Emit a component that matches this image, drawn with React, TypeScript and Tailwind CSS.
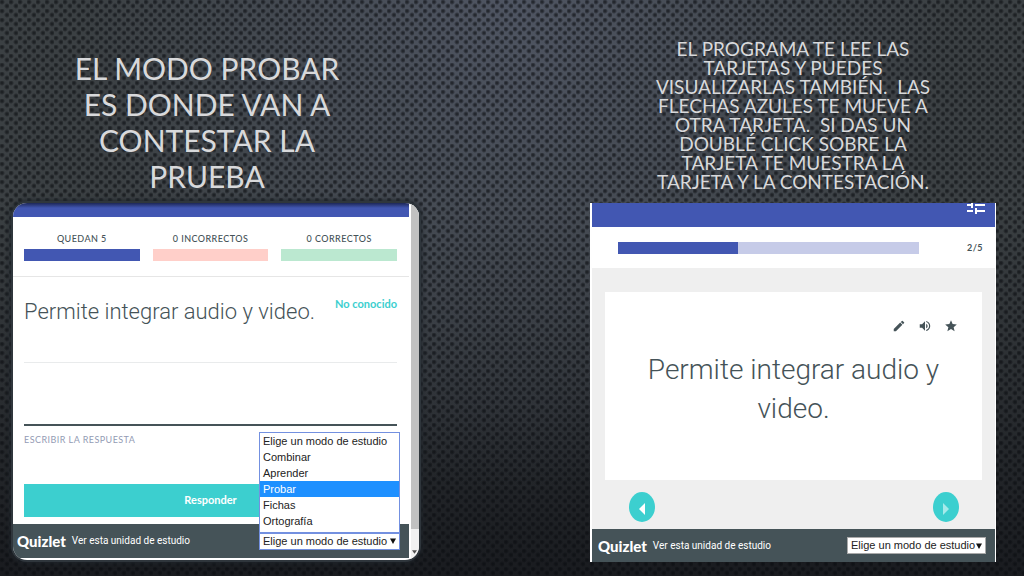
import type { ReactNode } from "react";
import { MdEdit, MdStar, MdTune, MdVolumeUp } from "react-icons/md";

const MODES = ["Combinar", "Aprender", "Probar", "Fichas", "Ortografía"];
const PLACEHOLDER = "Elige un modo de estudio";

const BACKDROP =
  "bg-[radial-gradient(circle_at_2px_2px,rgba(10,12,16,0.6)_1px,transparent_3px),radial-gradient(circle_at_7px_6px,rgba(10,12,16,0.6)_1px,transparent_3px),radial-gradient(ellipse_42%_85%_at_50%_0%,#4f5562_0%,rgba(79,85,98,0)_100%),linear-gradient(to_bottom,#3b4043_0%,#3b4043_35%,#191b1f_100%)] bg-[size:9px_9px,9px_9px,100%_100%,100%_100%]";

function Title({ lines, className }: { lines: string[]; className: string }) {
  return (
    <h2 className={`self-start text-center font-['Lato',sans-serif] font-normal text-[#d8d9db] ${className}`}>
      {lines.map((line) => (
        <span key={line} className="block whitespace-pre">
          {line}
        </span>
      ))}
    </h2>
  );
}

function ModeSelect({ className }: { className: string }) {
  return (
    <div className="relative flex items-center">
      <select
        aria-label="Modo de estudio"
        defaultValue=""
        className={`h-[17px] appearance-none border bg-white pl-[3px] text-[11px] leading-[15px] text-[#222] font-['Liberation_Sans',sans-serif] ${className}`}
      >
        <option value="">{PLACEHOLDER}</option>
        {MODES.map((mode) => (
          <option key={mode}>{mode}</option>
        ))}
      </select>
      <svg viewBox="0 0 6 6" className="pointer-events-none absolute right-1 size-[6px]" aria-hidden="true">
        <path d="M0 0.5h6L3 6z" fill="#111" />
      </svg>
    </div>
  );
}

function Footer({ className, children }: { className: string; children: ReactNode }) {
  return (
    <footer className={`flex items-center bg-[#455358] text-white ${className}`}>
      <span className="text-[15px] font-black leading-5">Quizlet</span>
      <a href="#unidad" className="ml-[6px] font-['Roboto',sans-serif] text-[10px] leading-5">
        Ver esta unidad de estudio
      </a>
      <div className="ml-auto">{children}</div>
    </footer>
  );
}

function Stat({ label, color }: { label: string; color: string }) {
  return (
    <div className="flex-1 text-center text-[9px] font-medium leading-[12px] tracking-wider text-[#455358]">
      {label}
      <div className={`mt-1 h-3 ${color}`} />
    </div>
  );
}

function TestPanel() {
  return (
    <section className="flex h-[357px] overflow-hidden rounded-[14px] bg-white font-['Lato',sans-serif] shadow-[0_0_0_2px_#2f363c,0_0_5px_3px_#20262c]">
      <div className="flex min-w-0 flex-1 flex-col">
        <div className="h-[14px] shrink-0 bg-[linear-gradient(to_bottom,#1d2757,#4257b2_5px)]" />
        <div className="flex gap-[13px] border-b border-[#e6e6e6] pt-4 pr-3 pb-[15px] pl-[11px]">
          <Stat label="QUEDAN 5" color="bg-[#4257b2]" />
          <Stat label="0 INCORRECTOS" color="bg-[#ffcfc9]" />
          <Stat label="0 CORRECTOS" color="bg-[#bbe8d0]" />
        </div>
        <div className="mr-3 ml-[11px] flex h-[86px] items-start justify-between border-b border-[#e9ebec] pt-5">
          <p className="font-['Roboto',sans-serif] text-[22px] leading-[30px] font-light text-[#455358]">
            Permite integrar audio y video.
          </p>
          <a href="#no-conocido" className="text-[11px] leading-[14px] font-bold whitespace-nowrap text-[#3ccfcf]">
            No conocido
          </a>
        </div>
        <form className="mr-3 ml-[11px] flex flex-col" onSubmit={(e) => e.preventDefault()}>
          <input id="respuesta" className="h-[63px] border-b-2 border-[#455358] outline-none" />
          <label htmlFor="respuesta" className="pt-2 text-[9px] leading-[12px] tracking-wider text-[#939bb4]">
            ESCRIBIR LA RESPUESTA
          </label>
          <button className="mt-[38px] h-[33px] bg-[#3ccfcf] text-[11px] font-bold text-white">Responder</button>
        </form>
        <Footer className="mt-auto mb-[2px] h-[34px] pr-[9px] pl-1">
          <div className="relative">
            <ModeSelect className="w-[141px] border-[#7390e0]" />
            <ul className="absolute bottom-full left-0 w-full border border-[#7390e0] bg-white pb-[3px] text-[11px] leading-[16px] text-[#222] font-['Liberation_Sans',sans-serif]">
              {[PLACEHOLDER, ...MODES].map((mode) => (
                <li key={mode} className={mode === "Probar" ? "bg-[#1e90ff] pl-[3px] text-white" : "pl-[3px]"}>
                  {mode}
                </li>
              ))}
            </ul>
          </div>
        </Footer>
      </div>
      <div className="ml-[2px] flex w-2 flex-col bg-[#f1f1f1]">
        <div className="h-[326px] bg-[#c1c1c1]" />
        <svg viewBox="0 0 6 4" className="mx-px mt-[21px] h-1 w-[5px]" aria-hidden="true">
          <path d="M0 0h6L3 4z" fill="#505050" />
        </svg>
      </div>
    </section>
  );
}

function CardsPanel() {
  return (
    <section className="flex h-[359px] flex-col border-r border-l-2 border-white bg-[#efefef] font-['Lato',sans-serif]">
      <div className="flex h-6 shrink-0 items-start justify-end overflow-hidden bg-[#4257b2] pr-[7px]">
        <button aria-label="Opciones" className="-mt-[10px] text-white">
          <MdTune className="size-6" />
        </button>
      </div>
      <div className="flex h-[41px] shrink-0 items-center bg-white pr-3 pl-[26px]">
        <div className="mr-12 h-3 flex-1 bg-[#c6cbe8]">
          <div className="h-full w-2/5 bg-[#4257b2]" />
        </div>
        <span className="text-[9px] font-bold tracking-wider text-[#455358]">2/5</span>
      </div>
      <div className="mx-[13px] mt-6 flex h-[188px] shrink-0 flex-col bg-white">
        <div className="flex justify-end gap-3 pt-[27px] pr-6 text-[#455358]">
          <button aria-label="Editar">
            <MdEdit className="size-[14px]" />
          </button>
          <button aria-label="Escuchar">
            <MdVolumeUp className="size-[14px]" />
          </button>
          <button aria-label="Marcar">
            <MdStar className="size-[14px]" />
          </button>
        </div>
        <p className="px-8 pt-[17px] text-center font-['Roboto',sans-serif] text-[28px] leading-[39px] font-light text-[#455358]">
          Permite integrar audio y video.
        </p>
      </div>
      <div className="flex flex-1 items-center justify-between pt-1 pr-9 pl-[37px]">
        <button aria-label="Anterior" className="flex h-[30px] w-[26px] items-center justify-center rounded-[50%] bg-[#3ccfcf]">
          <svg viewBox="0 0 6 12" className="mt-1 h-3 w-[6px]">
            <path d="M6 0v12L0 6z" fill="#fff" />
          </svg>
        </button>
        <button aria-label="Siguiente" className="flex h-[30px] w-[26px] items-center justify-center rounded-[50%] bg-[#3ccfcf]">
          <svg viewBox="0 0 6 12" className="mt-1 h-3 w-[6px]">
            <path d="M0 0v12L6 6z" fill="#a5eaea" />
          </svg>
        </button>
      </div>
      <Footer className="h-[33px] pr-[9px] pl-[6px]">
        <ModeSelect className="w-[139px] border-[#a9a9a9]" />
      </Footer>
    </section>
  );
}

export default function App() {
  return (
    <main className={`min-h-screen ${BACKDROP}`}>
      <div className="grid grid-cols-2 gap-x-[171px] gap-y-2 pt-[38px] pr-7 pl-[13px]">
        <Title
          className="pt-3 pr-[18px] pb-px text-[30px] leading-9"
          lines={["EL MODO PROBAR", "ES DONDE VAN A", "CONTESTAR LA", "PRUEBA"]}
        />
        <Title
          className="pt-px text-[19px] leading-[19px]"
          lines={[
            "EL PROGRAMA TE LEE LAS",
            "TARJETAS Y PUEDES",
            "VISUALIZARLAS TAMBIÉN.  LAS",
            "FLECHAS AZULES TE MUEVE A",
            "OTRA TARJETA.  SI DAS UN",
            "DOUBLÉ CLICK SOBRE LA",
            "TARJETA TE MUESTRA LA",
            "TARJETA Y LA CONTESTACIÓN.",
          ]}
        />
        <TestPanel />
        <CardsPanel />
      </div>
    </main>
  );
}
